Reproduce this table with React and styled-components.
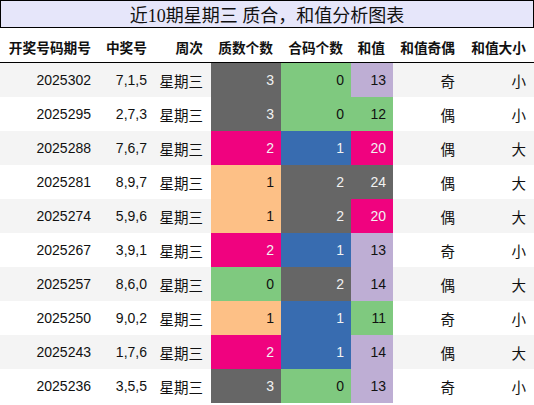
import styled, { createGlobalStyle } from 'styled-components';

const GlobalStyle = createGlobalStyle`
    body {
        margin: 0;
        background: #ffffff;
        font-family: "Liberation Sans", "Noto Sans CJK SC", sans-serif;
    }
`;

const colors = {
    grey: { bg: '#666666', fg: '#f2f2f2' },
    green: { bg: '#7fc97f', fg: '#111111' },
    purple: { bg: '#beaed4', fg: '#111111' },
    orange: { bg: '#fdc086', fg: '#111111' },
    blue: { bg: '#386cb0', fg: '#f2f2f2' },
    pink: { bg: '#f0027f', fg: '#f2f2f2' },
};

const rows = [
    ['2025302', '7,1,5', [3, 'grey'], [0, 'green'], [13, 'purple'], '奇', '小'],
    ['2025295', '2,7,3', [3, 'grey'], [0, 'green'], [12, 'green'], '偶', '小'],
    ['2025288', '7,6,7', [2, 'pink'], [1, 'blue'], [20, 'pink'], '偶', '大'],
    ['2025281', '8,9,7', [1, 'orange'], [2, 'grey'], [24, 'grey'], '偶', '大'],
    ['2025274', '5,9,6', [1, 'orange'], [2, 'grey'], [20, 'pink'], '偶', '大'],
    ['2025267', '3,9,1', [2, 'pink'], [1, 'blue'], [13, 'purple'], '奇', '小'],
    ['2025257', '8,6,0', [0, 'green'], [2, 'grey'], [14, 'purple'], '偶', '大'],
    ['2025250', '9,0,2', [1, 'orange'], [1, 'blue'], [11, 'green'], '奇', '小'],
    ['2025243', '1,7,6', [2, 'pink'], [1, 'blue'], [14, 'purple'], '偶', '大'],
    ['2025236', '3,5,5', [3, 'grey'], [0, 'green'], [13, 'purple'], '奇', '小'],
];

const headers = ['开奖号码期号', '中奖号', '周次', '质数个数', '合码个数', '和值', '和值奇偶', '和值大小'];

const Wrapper = styled.div`
    width: 534px;
`;

const Title = styled.div`
    height: 26px;
    border: 1px solid #000000;
    background: #e6e6fa;
    display: flex;
    align-items: center;
    justify-content: center;
    font-family: "Liberation Serif", "Noto Sans CJK SC", serif;
    font-size: 18px;
    color: #111111;
`;

const Grid = styled.div`
    display: grid;
    grid-template-columns: 99px 56px 56px 70px 70px 42px 70px 71px;
`;

const HeadCell = styled.div`
    height: 35px;
    border-bottom: 1px solid #000000;
    display: flex;
    align-items: center;
    justify-content: flex-end;
    padding: 4px 8px 0 0;
    box-sizing: border-box;
    font-family: "Noto Sans CJK SC", sans-serif;
    font-weight: 700;
    font-size: 13.7px;
    color: #111111;
    white-space: nowrap;
`;

const Cell = styled.div`
    height: 34px;
    display: flex;
    align-items: center;
    justify-content: flex-end;
    padding-right: ${p => (p.$tone ? 7 : 8)}px;
    box-sizing: border-box;
    font-size: 14px;
    white-space: nowrap;
    background: ${p => (p.$tone ? colors[p.$tone].bg : p.$odd ? '#f4f4f4' : '#ffffff')};
    color: ${p => (p.$tone ? colors[p.$tone].fg : '#111111')};
`;

const Cjk = styled.span`
    font-family: "Noto Sans CJK SC", sans-serif;
    font-size: 14.5px;
`;

export default function App() {
    return (
        <Wrapper>
            <GlobalStyle />
            <Title>近10期星期三 质合，和值分析图表</Title>
            <Grid>
                {headers.map(h => (
                    <HeadCell key={h}>{h}</HeadCell>
                ))}
                {rows.map((r, i) => {
                    const odd = i % 2 === 0;
                    return [
                        <Cell key={`${i}a`} $odd={odd}>{r[0]}</Cell>,
                        <Cell key={`${i}b`} $odd={odd}>{r[1]}</Cell>,
                        <Cell key={`${i}c`} $odd={odd}><Cjk>星期三</Cjk></Cell>,
                        <Cell key={`${i}d`} $tone={r[2][1]}>{r[2][0]}</Cell>,
                        <Cell key={`${i}e`} $tone={r[3][1]}>{r[3][0]}</Cell>,
                        <Cell key={`${i}f`} $tone={r[4][1]}>{r[4][0]}</Cell>,
                        <Cell key={`${i}g`} $odd={odd}><Cjk>{r[5]}</Cjk></Cell>,
                        <Cell key={`${i}h`} $odd={odd}><Cjk>{r[6]}</Cjk></Cell>,
                    ];
                })}
            </Grid>
        </Wrapper>
    );
}
